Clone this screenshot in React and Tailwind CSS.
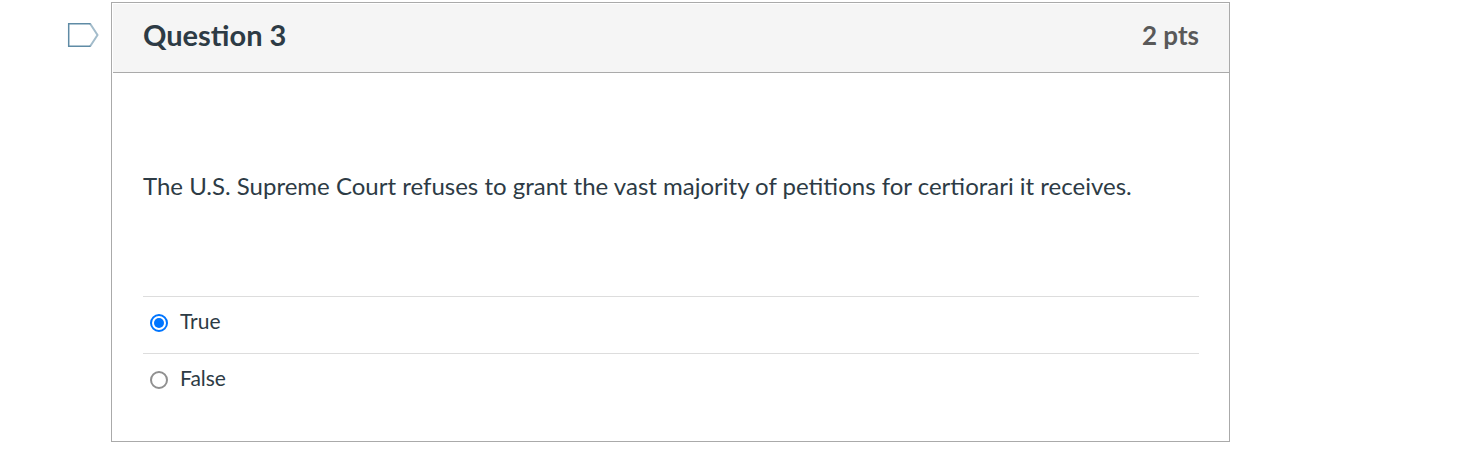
import React, { useState } from "react";

const ANSWERS = ["True", "False"];

export default function App() {
  const [selected, setSelected] = useState("True");

  return (
    <main className="flex items-start pt-0.5 pr-[235px] pl-[67px] font-[Lato,sans-serif] text-[#2d3b45]">
      <button type="button" aria-label="Flag question" className="mt-5 mr-3 shrink-0">
        <svg width="32" height="26" viewBox="0 0 32 26" fill="none">
          <path d="M23 1.5L30.5 13L23 24.5" stroke="#a3bccb" strokeWidth="2" />
          <path d="M23.5 1.7H1.7V24.3H23.5" stroke="#5f8ba5" strokeWidth="1.5" />
        </svg>
      </button>

      <section className="min-w-0 flex-1 border border-[#aaa] pt-px pl-px">
        <header className="flex items-center justify-between border-b border-[#aaa] bg-[#f5f5f5] px-[30px] pt-[7px] pb-[13px]">
          <h2 className="text-[29px] leading-[48px] font-bold">Question 3</h2>
          <span className="text-[26px] leading-[48px] font-bold text-[#595959]">2 pts</span>
        </header>

        <div className="px-[30px] pb-[31px]">
          <p className="pt-[95px] pb-[92px] text-[24px] leading-9">
            The U.S. Supreme Court refuses to grant the vast majority of petitions for certiorari it receives.
          </p>

          <fieldset>
            {ANSWERS.map((answer) => (
              <div key={answer} className="border-t border-[#ddd]">
                <label className="flex gap-3 pt-2.5 pb-[18px] pl-[7px] text-[21px] leading-7">
                  <input
                    type="radio"
                    name="answer"
                    value={answer}
                    checked={selected === answer}
                    onChange={() => setSelected(answer)}
                    className="mt-[7px] size-[18px] appearance-none rounded-full border-2 border-[#909090] bg-clip-content p-0.5 checked:border-[#0075ff] checked:bg-[#0075ff]"
                  />
                  {answer}
                </label>
              </div>
            ))}
          </fieldset>
        </div>
      </section>
    </main>
  );
}
